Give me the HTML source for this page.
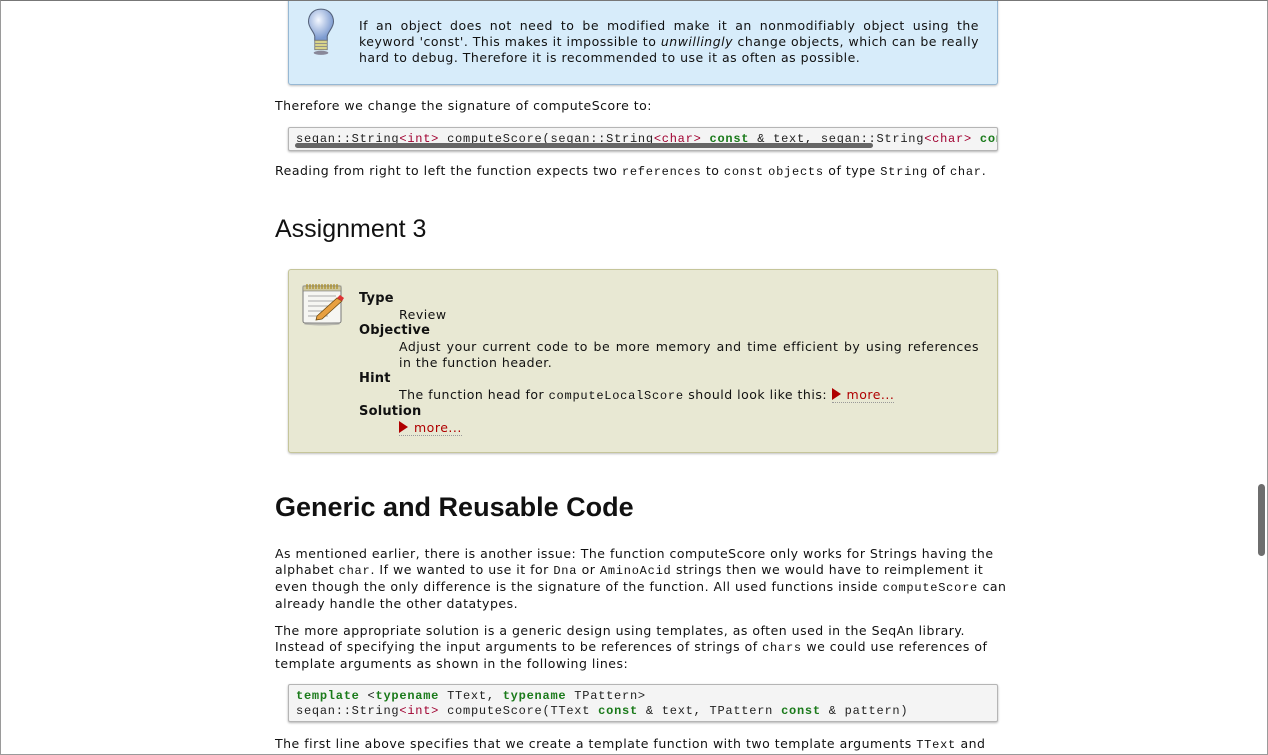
<!DOCTYPE html>
<html><head><meta charset="utf-8"><style>
html,body{margin:0;padding:0;width:1268px;height:755px;overflow:hidden;background:#fff}
body{position:relative;font-family:"DejaVu Sans","Liberation Sans",sans-serif;font-size:12.5px;letter-spacing:0.5px;color:#111}
.frame{position:absolute;left:0;top:0;width:1266px;height:753px;border:1px solid #9a9a9a;border-top-color:#777}
.a{position:absolute}
p{margin:0;line-height:16px;white-space:nowrap}
code,.m{font-family:"Liberation Mono",monospace;font-size:12px;letter-spacing:0.75px}
.tip{left:288px;top:-8px;width:708px;height:91px;background:#d7ecfa;border:1px solid #96b8d4;border-radius:3px;box-shadow:0 1px 2px rgba(0,0,0,.25)}
.code{left:288px;width:708px;background:#f4f4f4;border:1px solid #b5b5b5;border-radius:2px;box-shadow:0 1px 2px rgba(0,0,0,.3);overflow:hidden}
.code pre{margin:0;padding:4px 7px;font-family:"Liberation Mono",monospace;font-size:12px;letter-spacing:0.75px;line-height:15px;color:#222;white-space:pre}
.k{color:#1a7a1a;font-weight:bold}.t{color:#a00030}
.asg{left:288px;top:269px;width:708px;height:182px;background:#e8e8d3;border:1px solid #c5c59a;border-radius:3px;box-shadow:0 1px 2px rgba(0,0,0,.25)}
dt{font-weight:bold;font-size:13px;line-height:16px;letter-spacing:0.2px}
dd{margin:0 0 0 40px;line-height:16px}
.more{color:#b00000;border-bottom:1px dotted #999}
.tri{display:inline-block;width:0;height:0;border-left:9px solid #b00000;border-top:6px solid transparent;border-bottom:6px solid transparent;vertical-align:-1px;margin-right:6px}
.h{font-family:"Liberation Sans",sans-serif;letter-spacing:0}
</style></head><body>
<div class="a tip">
 <svg class="a" style="left:16px;top:14px" width="32" height="50" viewBox="0 0 30 48">
  <defs><radialGradient id="g" cx="40%" cy="35%" r="60%"><stop offset="0" stop-color="#f4f8ff"/><stop offset="1" stop-color="#7d9bd0"/></radialGradient></defs>
  <path d="M15 2C7 2 3 8 3 14c0 6 5 9 6 14v4h12v-4c1-5 6-8 6-14C27 8 23 2 15 2z" fill="url(#g)" stroke="#55627a" stroke-width="1"/>
  <rect x="9" y="32" width="12" height="9" fill="#d9d48a" stroke="#777" stroke-width=".8"/>
  <path d="M9 35h12M9 38h12" stroke="#888" stroke-width=".8"/>
  <ellipse cx="15" cy="44" rx="7" ry="2" fill="#889"/>
 </svg>
 <p class="a" style="left:70px;top:25px;width:620px;white-space:normal;text-align:justify;text-align-last:left">If an object does not need to be modified make it an nonmodifiably object using the keyword 'const'. This makes it impossible to <i>unwillingly</i> change objects, which can be really hard to debug. Therefore it is recommended to use it as often as possible.</p>
</div>
<p class="a" style="left:275px;top:98px">Therefore we change the signature of computeScore to:</p>
<div class="a code" style="top:127px;height:22px"><pre>seqan::String<span class="t">&lt;int&gt;</span> computeScore(seqan::String<span class="t">&lt;char&gt;</span> <span class="k">const</span> &amp; text, seqan::String<span class="t">&lt;char&gt;</span> <span class="k">const</span> &amp; pattern)</pre>
 <div class="a" style="left:6px;top:15px;width:578px;height:5px;background:#666;border-radius:3px"></div></div>
<p class="a" style="left:275px;top:163px">Reading from right to left the function expects two <code>references</code> to <code>const</code> <code>objects</code> of type <code>String</code> of <code>char</code>.</p>
<div class="a h" style="left:275px;top:214px;font-size:25px;line-height:30px">Assignment 3</div>
<div class="a asg">
 <svg class="a" style="left:12px;top:12px" width="46" height="44" viewBox="0 0 46 44">
  <rect x="2" y="4" width="38" height="37" rx="2" fill="#f6f6f2" stroke="#777"/>
  <rect x="2" y="4" width="38" height="5" fill="#cfc9a0" stroke="#777" stroke-width=".6"/>
  <path d="M6 2v5M9 2v5M12 2v5M15 2v5M18 2v5M21 2v5M24 2v5M27 2v5M30 2v5M33 2v5M36 2v5" stroke="#a88a20" stroke-width="1.2"/>
  <path d="M7 14h28M7 19h28M7 24h28M7 29h22M7 34h20" stroke="#aaa"/>
  <path d="M16 34l20-18 5 3-20 18-6 1z" fill="#e8a040" stroke="#6b4a10" stroke-width=".8"/>
  <path d="M36 16l5 3 2-3-4-3z" fill="#d33"/>
  <ellipse cx="21" cy="42" rx="18" ry="1.5" fill="#999" opacity=".6"/>
 </svg>
 <dl class="a" style="left:70px;top:21px;width:620px;margin:0">
  <dt>Type</dt><dd>Review</dd>
  <dt>Objective</dt><dd style="text-align:justify">Adjust your current code to be more memory and time efficient by using references in the function header.</dd>
  <dt>Hint</dt><dd>The function head for <code>computeLocalScore</code> should look like this: <span class="more"><span class="tri"></span>more...</span></dd>
  <dt>Solution</dt><dd><span class="more"><span class="tri"></span>more...</span></dd>
 </dl>
</div>
<div class="a h" style="left:275px;top:491px;font-size:27px;font-weight:bold;line-height:32px">Generic and Reusable Code</div>
<p class="a" style="left:275px;top:546px">As mentioned earlier, there is another issue: The function computeScore only works for Strings having the<br>alphabet <code>char</code>. If we wanted to use it for <code>Dna</code> or <code>AminoAcid</code> strings then we would have to reimplement it<br>even though the only difference is the signature of the function. All used functions inside <code>computeScore</code> can<br>already handle the other datatypes.</p>
<p class="a" style="left:275px;top:623px">The more appropriate solution is a generic design using templates, as often used in the SeqAn library.<br>Instead of specifying the input arguments to be references of strings of <code>chars</code> we could use references of<br>template arguments as shown in the following lines:</p>
<div class="a code" style="top:684px;height:36px"><pre><span class="k">template</span> &lt;<span class="k">typename</span> TText, <span class="k">typename</span> TPattern&gt;
seqan::String<span class="t">&lt;int&gt;</span> computeScore(TText <span class="k">const</span> &amp; text, TPattern <span class="k">const</span> &amp; pattern)</pre></div>
<p class="a" style="left:275px;top:736px">The first line above specifies that we create a template function with two template arguments <code>TText</code> and</p>
<div class="a" style="left:1258px;top:484px;width:7px;height:72px;background:#6e6e6e;border-radius:4px"></div>
<div class="frame"></div>
</body></html>
